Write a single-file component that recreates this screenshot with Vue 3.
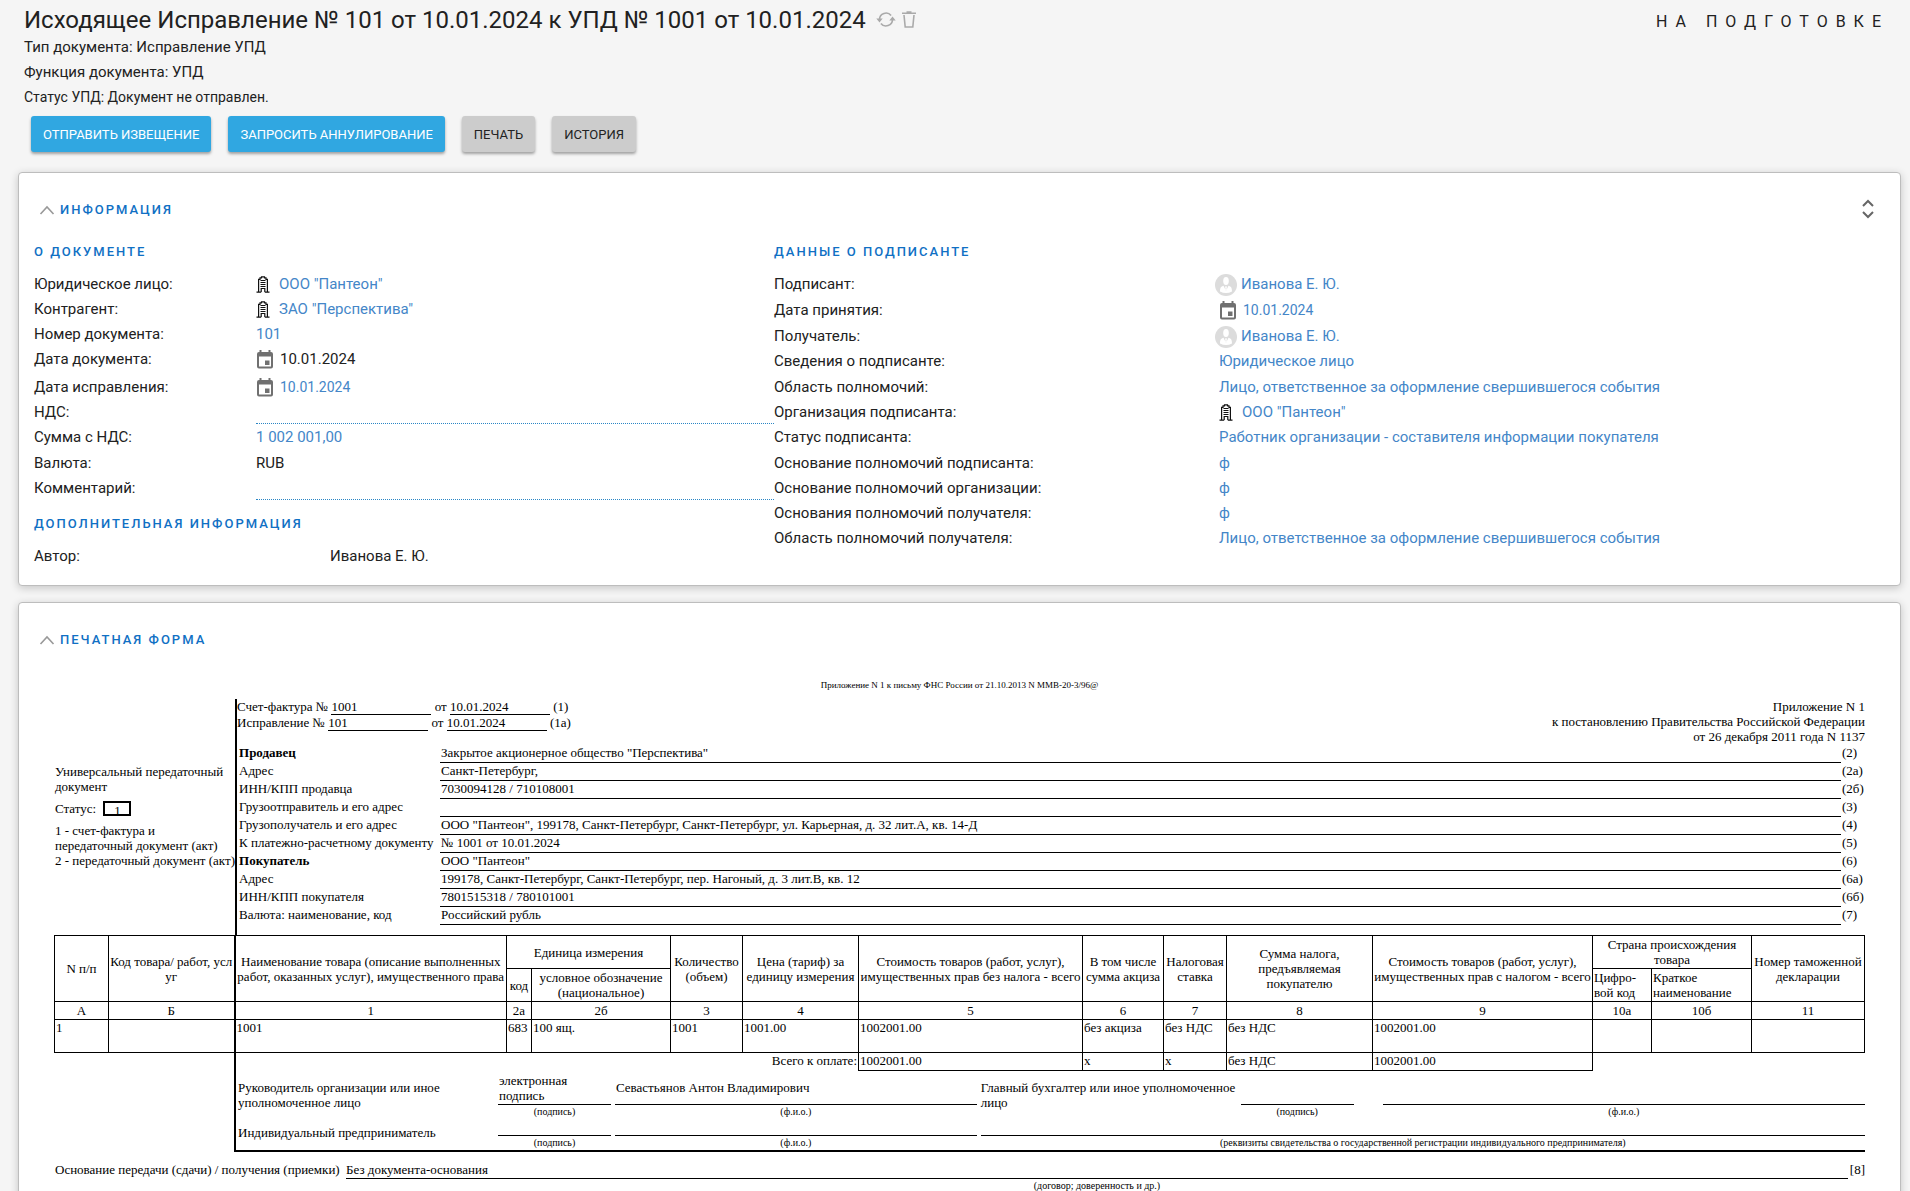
<script setup>
import { ref } from 'vue'

const infoOpen = ref(true)
const formOpen = ref(true)

const documentFields = [
  { label: 'Юридическое лицо:', value: 'ООО "Пантеон"', icon: 'building', link: true },
  { label: 'Контрагент:', value: 'ЗАО "Перспектива"', icon: 'building', link: true },
  { label: 'Номер документа:', value: '101', link: true },
  { label: 'Дата документа:', value: '10.01.2024', icon: 'calendar' },
  { label: 'Дата исправления:', value: '10.01.2024', icon: 'calendar', link: true, size: 'tall', small: true },
  { label: 'НДС:', input: 'vat' },
  { label: 'Сумма с НДС:', value: '1 002 001,00', link: true },
  { label: 'Валюта:', value: 'RUB', size: 'roomy' },
  { label: 'Комментарий:', input: 'comment' },
]

const signerFields = [
  { label: 'Подписант:', value: 'Иванова Е. Ю.', icon: 'avatar', link: true },
  { label: 'Дата принятия:', value: '10.01.2024', icon: 'calendar', link: true, size: 'roomy', small: true },
  { label: 'Получатель:', value: 'Иванова Е. Ю.', icon: 'avatar', link: true, size: 'roomy' },
  { label: 'Сведения о подписанте:', value: 'Юридическое лицо', link: true },
  { label: 'Область полномочий:', value: 'Лицо, ответственное за оформление свершившегося события', link: true, size: 'roomy' },
  { label: 'Организация подписанта:', value: 'ООО "Пантеон"', icon: 'building', link: true },
  { label: 'Статус подписанта:', value: 'Работник организации - составителя информации покупателя', link: true },
  { label: 'Основание полномочий подписанта:', value: 'ф', link: true, size: 'roomy' },
  { label: 'Основание полномочий организации:', value: 'ф', link: true },
  { label: 'Основания полномочий получателя:', value: 'ф', link: true },
  { label: 'Область полномочий получателя:', value: 'Лицо, ответственное за оформление свершившегося события', link: true },
]

const columns = [
  { key: 'document', title: 'О документе', fields: documentFields },
  { key: 'signer', title: 'Данные о подписанте', fields: signerFields },
]

const parties = [
  { label: 'Продавец', value: 'Закрытое акционерное общество "Перспектива"', no: '(2)', bold: true },
  { label: 'Адрес', value: 'Санкт-Петербург,', no: '(2а)' },
  { label: 'ИНН/КПП продавца', value: '7030094128 / 710108001', no: '(2б)' },
  { label: 'Грузоотправитель и его адрес', value: '', no: '(3)' },
  { label: 'Грузополучатель и его адрес', value: 'ООО "Пантеон", 199178, Санкт-Петербург, Санкт-Петербург, ул. Карьерная, д. 32 лит.А, кв. 14-Д', no: '(4)' },
  { label: 'К платежно-расчетному документу', value: '№ 1001 от 10.01.2024', no: '(5)' },
  { label: 'Покупатель', value: 'ООО "Пантеон"', no: '(6)', bold: true },
  { label: 'Адрес', value: '199178, Санкт-Петербург, Санкт-Петербург, пер. Нагоный, д. 3 лит.В, кв. 12', no: '(6а)' },
  { label: 'ИНН/КПП покупателя', value: '7801515318 / 780101001', no: '(6б)' },
  { label: 'Валюта: наименование, код', value: 'Российский рубль', no: '(7)' },
]

const colNumbers = ['А', 'Б', '1', '2а', '2б', '3', '4', '5', '6', '7', '8', '9', '10а', '10б', '11']
const goods = ['1', '', '1001', '683', '100 ящ.', '1001', '1001.00', '1002001.00', 'без акциза', 'без НДС', 'без НДС', '1002001.00', '', '', '']
const totals = ['1002001.00', 'х', 'х', 'без НДС', '1002001.00']
</script>

<template>
  <div class="page">
    <header class="head">
      <div class="head-row">
        <h1>Исходящее Исправление № 101 от 10.01.2024 к УПД № 1001 от 10.01.2024</h1>
        <div class="tools">
          <button class="icon-btn" type="button" aria-label="Обновить">
            <svg width="20" height="17" viewBox="0 0 20 17" fill="none" stroke="#aaa" stroke-width="1.6">
              <path d="M3.500 8.500a6.500 6.500 0 0 1 11.600-4M16.500 8.500a6.500 6.500 0 0 1-11.600 4" />
              <path d="M.3 7.500h6.400L3.500 11.500zM13.300 9.500h6.400L16.500 5.500z" fill="#aaa" stroke="none" />
            </svg>
          </button>
          <button class="icon-btn" type="button" aria-label="Удалить">
            <svg width="14" height="17" viewBox="0 0 14 17" fill="none" stroke="#aaa" stroke-width="1.6">
              <path d="M0 2.300h14M4.500 1h5" />
              <path d="M2 4l1.200 12h7.600L12 4" />
            </svg>
          </button>
        </div>
        <div class="state">На подготовке</div>
      </div>
      <p>Тип документа: Исправление УПД</p>
      <p>Функция документа: УПД</p>
      <p class="status">Статус УПД: Документ не отправлен.</p>
      <div class="actions">
        <button class="btn primary" type="button">Отправить извещение</button>
        <button class="btn primary" type="button">Запросить аннулирование</button>
        <button class="btn" type="button">Печать</button>
        <button class="btn" type="button">История</button>
      </div>
    </header>

    <section class="card info">
      <div class="card-head">
        <button class="toggle" type="button" :aria-expanded="infoOpen" @click="infoOpen = !infoOpen">
          <svg width="16" height="10" viewBox="0 0 16 10" fill="none" stroke="#999" stroke-width="1.6"><path d="M1.5 9L8 2l6.5 7" /></svg>
          <span class="caps">Информация</span>
        </button>
        <button class="icon-btn" type="button" aria-label="Свернуть или развернуть">
          <svg width="12" height="22" viewBox="0 0 12 22" fill="none" stroke="#666" stroke-width="2"><path d="M1 7l5-5 5 5M1 13l5 5 5-5" /></svg>
        </button>
      </div>
      <div v-show="infoOpen" class="info-cols">
        <div v-for="col in columns" :key="col.key" :class="['col', col.key]">
          <h2 class="caps">{{ col.title }}</h2>
          <div v-for="f in col.fields" :key="f.label" :class="['field', f.size]">
            <label v-if="f.input" class="name" :for="f.input">{{ f.label }}</label>
            <span v-else class="name">{{ f.label }}</span>
            <input v-if="f.input" :id="f.input" class="edit" type="text" />
            <span v-else :class="['value', { small: f.small }]">
              <svg v-if="f.icon === 'building'" class="i-building" width="14" height="17" viewBox="0 0 14 17" fill="none" stroke="#111" stroke-width="1.2">
                <path d="M2.600 16V3.400H4V1.800h1.500V.800h3v1H10v1.600h1.400V16" />
                <path d="M4.500 4.500h5M4.500 6.500h5M4.500 8.500h5M4.500 10.500h5" />
                <path d="M5.200 16v-3.500h3.600V16M.5 16.200h4.700M8.800 16.200h4.700" />
              </svg>
              <svg v-else-if="f.icon === 'calendar'" class="i-calendar" width="18" height="19" viewBox="0 0 18 19">
                <path d="M3.5 0h2v2h7V0h2v2H15a2 2 0 0 1 2 2v12.500a2 2 0 0 1-2 2H3a2 2 0 0 1-2-2V4a2 2 0 0 1 2-2h.5zM3 6.500v10h12v-10z" fill="#707070" fill-rule="evenodd" />
                <path d="M9 10.500h4.500V15H9z" fill="#707070" />
              </svg>
              <svg v-else-if="f.icon === 'avatar'" class="i-avatar" width="22" height="22" viewBox="0 0 22 22">
                <circle cx="11" cy="11" r="11" fill="#dcdcdc" />
                <ellipse cx="11" cy="7" rx="2.800" ry="4" fill="#fff" />
                <path d="M5 17.500c0-4 1.200-5 3.500-5.700L11 17l2.500-5.200c2.300.7 3.500 1.700 3.500 5.700q-6 3-12 0z" fill="#fff" />
                <path d="M11 12l1 1-.5 1 .5 2.500h-2l.5-2.500-.5-1z" fill="#fff" />
              </svg>
              <a v-if="f.link" href="#">{{ f.value }}</a>
              <template v-else>{{ f.value }}</template>
            </span>
          </div>
          <template v-if="col.key === 'document'">
            <h2 class="caps extra">Дополнительная информация</h2>
            <div class="field author">
              <span class="name">Автор:</span>
              <span class="value">Иванова Е. Ю.</span>
            </div>
          </template>
        </div>
      </div>
    </section>

    <section class="card form">
      <div class="card-head">
        <button class="toggle" type="button" :aria-expanded="formOpen" @click="formOpen = !formOpen">
          <svg width="16" height="10" viewBox="0 0 16 10" fill="none" stroke="#999" stroke-width="1.6"><path d="M1.5 9L8 2l6.5 7" /></svg>
          <span class="caps">Печатная форма</span>
        </button>
      </div>
      <div v-show="formOpen" class="paper">
        <div class="note">Приложение N 1 к письму ФНС России от 21.10.2013 N ММВ-20-3/96@</div>

        <div class="top">
          <div class="side">
            <div>Универсальный передаточный документ</div>
            <div class="kind">Статус: <span class="box">1</span></div>
            <div>1 - счет-фактура и передаточный документ (акт)</div>
            <div class="nowrap">2 - передаточный документ (акт)</div>
          </div>
          <div class="main">
            <div class="intro">
              <div>
                <div class="num">Счет-фактура № <span class="blank">1001</span> от <span class="blank">10.01.2024</span> (1)</div>
                <div class="num">Исправление № <span class="blank">101</span> от <span class="blank">10.01.2024</span> (1а)</div>
              </div>
              <div class="law">Приложение N 1<br />к постановлению Правительства Российской Федерации<br />от 26 декабря 2011 года N 1137</div>
            </div>
            <div v-for="p in parties" :key="p.no" class="party">
              <span :class="['who', { bold: p.bold }]">{{ p.label }}</span>
              <span class="what">{{ p.value }}</span>
              <span class="no">{{ p.no }}</span>
            </div>
          </div>
        </div>

        <table class="goods">
          <colgroup>
            <col class="c54" /><col class="c126" /><col /><col class="c25" /><col class="c139" />
            <col class="c72" /><col class="c116" /><col class="c224" /><col class="c81" /><col class="c63" />
            <col class="c146" /><col class="c220" /><col class="c59" /><col class="c100" /><col class="c113" />
          </colgroup>
          <thead>
            <tr class="h33">
              <th rowspan="2">N п/п</th>
              <th rowspan="2" class="split">Код товара/ работ, услуг</th>
              <th rowspan="2" class="thick">Наименование товара (описание выполненных работ, оказанных услуг), имущественного права</th>
              <th colspan="2">Единица измерения</th>
              <th rowspan="2">Количество (объем)</th>
              <th rowspan="2">Цена (тариф) за единицу измерения</th>
              <th rowspan="2">Стоимость товаров (работ, услуг), имущественных прав без налога - всего</th>
              <th rowspan="2">В том числе сумма акциза</th>
              <th rowspan="2">Налоговая ставка</th>
              <th rowspan="2">Сумма налога, предъявляемая покупателю</th>
              <th rowspan="2">Стоимость товаров (работ, услуг), имущественных прав с налогом - всего</th>
              <th colspan="2">Страна происхождения товара</th>
              <th rowspan="2">Номер таможенной декларации</th>
            </tr>
            <tr class="h33">
              <th>код</th>
              <th>условное обозначение (национальное)</th>
              <th class="left">Цифро-<br />вой код</th>
              <th class="left">Краткое наименование</th>
            </tr>
            <tr class="h18">
              <th v-for="(n, i) in colNumbers" :key="n" :class="{ thick: i === 2 }">{{ n }}</th>
            </tr>
          </thead>
          <tbody>
            <tr class="h33">
              <td v-for="(g, i) in goods" :key="i" :class="{ thick: i === 2 }">{{ g }}</td>
            </tr>
            <tr class="h18">
              <td colspan="2" class="bare"></td>
              <td colspan="5" class="bare thick sum">Всего к оплате:</td>
              <td v-for="(t, i) in totals" :key="i">{{ t }}</td>
              <td colspan="3" class="bare"></td>
            </tr>
          </tbody>
        </table>

        <div class="signs">
          <span class="who-sign">Руководитель организации или иное уполномоченное лицо</span>
          <span class="line">электронная подпись</span>
          <span class="line mid">Севастьянов Антон Владимирович</span>
          <span class="who-sign flush">Главный бухгалтер или иное уполномоченное лицо</span>
          <span class="line"></span>
          <span></span>
          <span class="line"></span>

          <span class="hint">(подпись)</span>
          <span class="hint">(ф.и.о.)</span>
          <span class="hint">(подпись)</span>
          <span></span>
          <span class="hint">(ф.и.о.)</span>

          <span class="who-sign person">Индивидуальный предприниматель</span>
          <span class="line"></span>
          <span class="line"></span>
          <span class="line wide"></span>

          <span class="hint">(подпись)</span>
          <span class="hint">(ф.и.о.)</span>
          <span class="hint wide">(реквизиты свидетельства о государственной регистрации индивидуального предпринимателя)</span>
        </div>

        <div class="basis">
          <span class="basis-name">Основание передачи (сдачи) / получения (приемки)</span>
          <span class="basis-value">Без документа-основания</span>
          <span class="basis-no">[8]</span>
          <span class="hint basis-hint">(договор; доверенность и др.)</span>
        </div>
      </div>
    </section>
  </div>
</template>

<style>
body {
  background: #f5f5f5;
}
</style>

<style scoped>
.page {
  font-family: Roboto, "Noto Sans", sans-serif;
  font-size: 15px;
  color: #212121;
  padding: 0 9px 0 18px;
}
button {
  font-family: inherit;
  cursor: pointer;
}
.icon-btn,
.toggle {
  display: flex;
  align-items: center;
  padding: 0;
  border: 0;
  background: none;
}
.head {
  padding: 4px 12px 0 6px;
}
.head-row {
  display: flex;
  align-items: center;
  height: 31px;
}
h1 {
  margin: 0;
  font-size: 24px;
  font-weight: 400;
  line-height: 32px;
}
.tools {
  display: flex;
  align-items: center;
  gap: 6px;
  margin-left: 10px;
}
.state {
  margin-left: auto;
  padding-top: 5px;
  font-size: 16px;
  letter-spacing: 8px;
  line-height: 32px;
  text-transform: uppercase;
}
.head p {
  margin: 0;
  line-height: 25px;
}
.head p.status {
  font-size: 14px;
}
.actions {
  display: flex;
  gap: 17px;
  margin: 6px 7px 20px;
}
.btn {
  height: 36px;
  padding: 0 12px;
  border: 0;
  border-radius: 3px;
  background: #ccc;
  color: #222;
  font-size: 13px;
  text-transform: uppercase;
  box-shadow: 0 2px 3px rgba(0, 0, 0, 0.35);
}
.btn.primary {
  background: #30a7e1;
  color: #fff;
}
.card {
  border: 1px solid #bdbdbd;
  border-radius: 4px;
  background: #fff;
  box-shadow: 0 2px 8px rgba(0, 0, 0, 0.2);
}
.info {
  margin-bottom: 16px;
  padding: 22px 0 16px 15px;
}
.card-head {
  display: flex;
  align-items: center;
  justify-content: space-between;
  height: 29px;
  padding: 0 26px 0 5px;
}
.toggle {
  gap: 5px;
}
.caps {
  margin: 0;
  color: #1070c4;
  font-size: 13px;
  font-weight: 500;
  letter-spacing: 2px;
  line-height: 20px;
  text-transform: uppercase;
}
.info-cols {
  display: flex;
  margin-top: 18px;
}
.document {
  flex: 0 0 740px;
}
.signer {
  flex: 1;
}
.col h2 {
  margin-bottom: 10px;
}
.col h2.extra {
  margin-top: 13px;
}
.field {
  display: flex;
  align-items: flex-end;
  height: 25px;
  line-height: 25px;
  white-space: nowrap;
}
.field.roomy {
  height: 26px;
}
.field.tall {
  height: 28px;
}
.name {
  flex: 0 0 222px;
}
.signer .name {
  flex-basis: 445px;
}
.author .name {
  flex-basis: 296px;
}
.value {
  display: flex;
  align-items: center;
  height: 25px;
}
.small {
  font-size: 14px;
}
.value a {
  color: #4486c8;
  text-decoration: none;
}
.i-building {
  margin-right: 9px;
}
.i-calendar {
  margin-right: 6px;
}
.i-avatar {
  margin: 0 4px 0 -4px;
}
.edit {
  flex: 1;
  align-self: flex-start;
  box-sizing: border-box;
  height: 24px;
  padding: 0;
  border: 0;
  border-bottom: 1px dotted #2b86c5;
  outline: 0;
  background: none;
  color: #4486c8;
  font: inherit;
}
.form {
  padding: 22px 0 20px 15px;
}

/* Printed invoice */
.paper {
  --side: 180px;
  padding: 26px 35px 0 20px;
  color: #000;
  font-family: "Liberation Serif", "Times New Roman", serif;
  font-size: 13px;
  line-height: 15px;
}
.note {
  margin-bottom: 9px;
  font-size: 9px;
  line-height: 10px;
  text-align: center;
}
.top {
  display: flex;
}
.side {
  flex: 0 0 var(--side);
  box-sizing: border-box;
  padding: 65px 0 0 1px;
}
.kind {
  margin: 7px 0;
}
.box {
  display: inline-block;
  box-sizing: border-box;
  width: 28px;
  height: 15px;
  margin-left: 4px;
  border: 2px solid #000;
  line-height: 15px;
  text-align: center;
  vertical-align: top;
}
.nowrap {
  white-space: nowrap;
}
.main {
  flex: 1;
  border-left: 2px solid #000;
  padding-bottom: 10px;
}
.intro {
  display: flex;
  justify-content: space-between;
  height: 46px;
}
.num {
  height: 16px;
}
.blank {
  display: inline-block;
  width: 100px;
  border-bottom: 1px solid #000;
}
.law {
  text-align: right;
}
.party {
  display: flex;
  height: 18px;
}
.who {
  flex: 0 0 203px;
  padding-left: 2px;
}
.bold {
  font-weight: 700;
}
.what {
  flex: 1;
  border-bottom: 1px solid #000;
  padding-left: 1px;
}
.no {
  flex: 0 0 24px;
  padding-left: 1px;
}
.who,
.what,
.no {
  box-sizing: border-box;
  line-height: 16px;
  white-space: nowrap;
}
.goods {
  width: 100%;
  table-layout: fixed;
  border-collapse: collapse;
}
.goods th,
.goods td {
  padding: 0;
  border: 1px solid #000;
  font-weight: 400;
}
.goods td {
  padding: 0 1px;
  text-align: left;
  vertical-align: top;
}
.goods .thick {
  border-left-width: 2px;
}
.goods .left {
  padding-left: 1px;
  text-align: left;
}
.goods .split {
  word-break: break-all;
}
.goods .bare {
  border-style: none;
}
.goods .bare.thick {
  border-left: 2px solid #000;
}
.goods .sum {
  text-align: right;
}
.h33 {
  height: 33px;
}
.h18 {
  height: 18px;
}
.c54 { width: 54px; }
.c126 { width: 126px; }
.c25 { width: 25px; }
.c139 { width: 139px; }
.c72 { width: 72px; }
.c116 { width: 116px; }
.c224 { width: 224px; }
.c81 { width: 81px; }
.c63 { width: 63px; }
.c146 { width: 146px; }
.c220 { width: 220px; }
.c59 { width: 59px; }
.c100 { width: 100px; }
.c113 { width: 113px; }
.signs {
  display: grid;
  grid-template-columns: 258px 113px 3fr 256px 113px 21px 4fr;
  grid-template-rows: 34px 15px 16px 14px;
  column-gap: 4px;
  margin-left: var(--side);
  border-left: 2px solid #000;
  border-bottom: 2px solid #000;
}
.who-sign {
  grid-row: 1 / span 2;
  grid-column: 1;
  padding: 9px 0 0 2px;
}
.who-sign.flush {
  grid-column: 4;
  padding-left: 0;
}
.who-sign.person {
  grid-row: 3 / span 2;
  padding-top: 5px;
}
.line {
  display: flex;
  align-items: flex-end;
  border-bottom: 1px solid #000;
  padding: 0 1px 1px;
}
.line.mid {
  align-items: center;
}
.wide {
  grid-column: 4 / -1;
}
.hint {
  font-size: 10px;
  line-height: 14px;
  text-align: center;
}
.basis {
  display: grid;
  grid-template-columns: 292px 1fr 17px;
  margin-top: 10px;
}
.basis-name {
  padding-left: 1px;
}
.basis-value {
  height: 16px;
  border-bottom: 1px solid #000;
}
.basis-no {
  text-align: right;
}
.basis-hint {
  grid-column: 2;
}
</style>
